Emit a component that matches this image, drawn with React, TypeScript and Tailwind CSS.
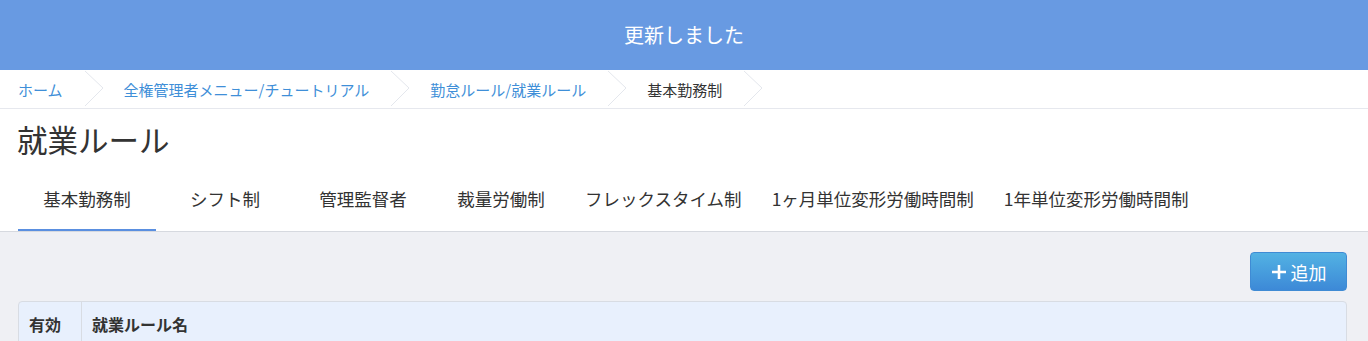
import React from "react";

const FONT = { fontFamily: '"Noto Sans CJK JP", "Noto Sans", sans-serif' };

function Chevron() {
  return (
    <svg width="20" height="38" viewBox="0 0 20 38" className="ml-[21px] mr-[20px] shrink-0">
      <path d="M1 1 L19 18 L1 36" fill="none" stroke="#e4e7ed" strokeWidth="1" />
    </svg>
  );
}

const crumbs = [
  { label: "ホーム", link: true },
  { label: "全権管理者メニュー/チュートリアル", link: true },
  { label: "勤怠ルール/就業ルール", link: true },
  { label: "基本勤務制", link: false },
];

const tabs = [
  "基本勤務制",
  "シフト制",
  "管理監督者",
  "裁量労働制",
  "フレックスタイム制",
  "1ヶ月単位変形労働時間制",
  "1年単位変形労働時間制",
];

export default function App() {
  return (
    <div className="w-[1368px] h-[341px] overflow-hidden bg-[#eff0f4]" style={FONT}>
      <div className="h-[70px] bg-[#689ae2] flex items-center justify-center text-white text-[20px] leading-none">
        更新しました
      </div>
      <div className="h-[39px] bg-white border-b border-[#e6e8ee] flex items-center pl-[18px] text-[15px] leading-none">
        {crumbs.map((c, i) => (
          <div key={i} className="flex items-center">
            <span className={c.link ? "text-[#3f8fd8]" : "text-[#333333]"}>{c.label}</span>
            <Chevron />
          </div>
        ))}
      </div>
      <div className="bg-white">
        <div className="pl-[17px] pt-[12px] text-[30.5px] leading-[36px] text-[#333333]">就業ルール</div>
        <div className="flex pl-[18px] h-[64px] mt-[10px]">
          {tabs.map((t, i) => (
            <div
              key={i}
              className="relative min-w-[138px] px-[15px] flex items-center justify-center text-[17.5px] text-[#333333] leading-none"
            >
              {t}
              {i === 0 && <span className="absolute left-0 right-0 bottom-0 h-[2px] bg-[#5a8fe0]" />}
            </div>
          ))}
        </div>
      </div>
      <div className="h-px bg-[#d6d9df]" />
      <div className="pl-[18px] pr-[21px] pt-[20px]">
        <div className="flex justify-end">
          <button className="w-[97px] h-[39px] rounded-[4px] bg-gradient-to-b from-[#53b2e3] to-[#3d89d7] border border-[#3f8bd4] text-white text-[18px] flex items-center justify-center gap-[4px] leading-none">
            <svg width="16" height="16" viewBox="0 0 16 16">
              <path d="M8 1 V15 M1 8 H15" stroke="white" strokeWidth="2.6" />
            </svg>
            追加
          </button>
        </div>
        <div className="mt-[10px] rounded-[4px] border border-[#d8dce3] bg-[#e8f0fd] overflow-hidden">
          <div className="flex h-[44px] text-[16px] font-bold text-[#333333]">
            <div className="w-[63px] border-r border-[#d8dce3] flex items-center pl-[10px]">有効</div>
            <div className="flex items-center pl-[10px]">就業ルール名</div>
          </div>
        </div>
      </div>
    </div>
  );
}
